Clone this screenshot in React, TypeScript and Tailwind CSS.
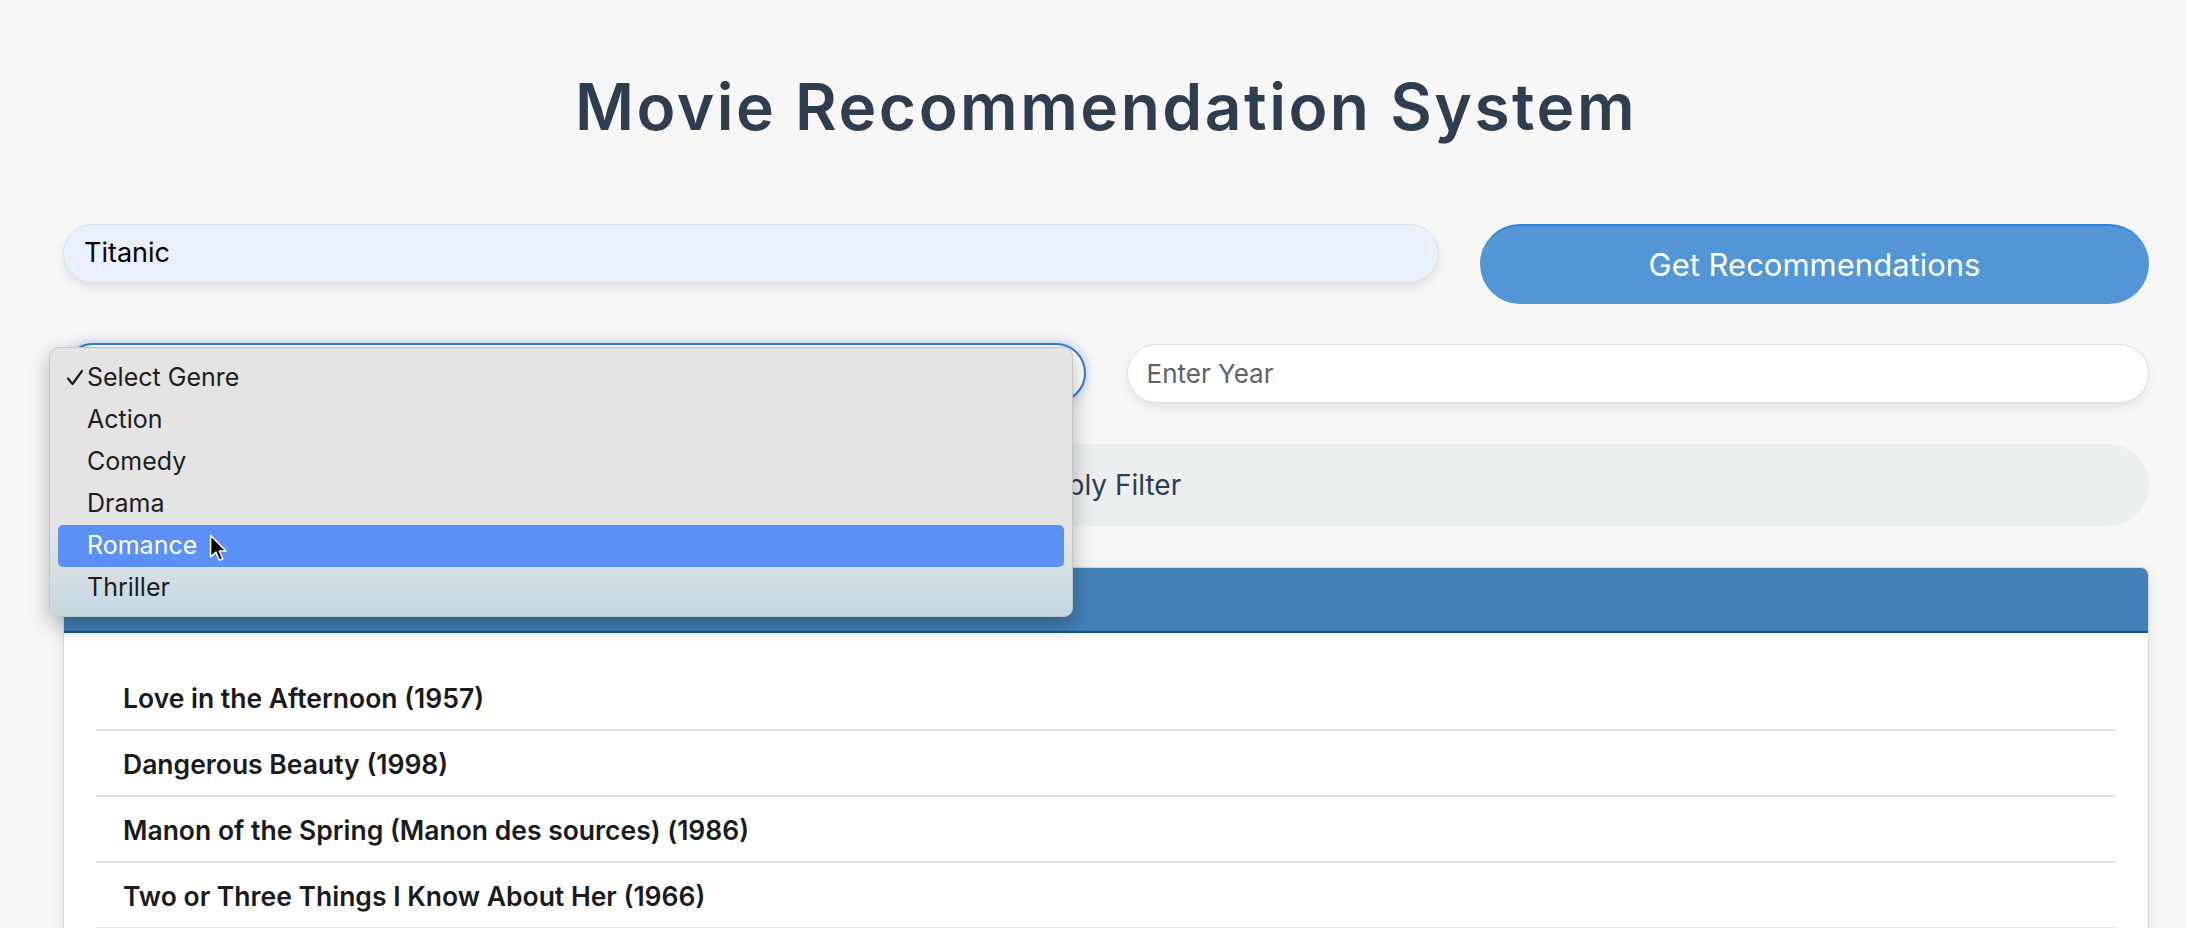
import React from 'react';

const genres = ['Select Genre', 'Action', 'Comedy', 'Drama', 'Romance', 'Thriller'];

const movies = [
  'Love in the Afternoon (1957)',
  'Dangerous Beauty (1998)',
  'Manon of the Spring (Manon des sources) (1986)',
  'Two or Three Things I Know About Her (1966)',
];

function Cursor() {
  return (
    <svg width="18" height="28" viewBox="0 0 12 19" className="absolute left-[151px] top-[9px]">
      <path
        d="M1 1 L1 15.5 L4.6 12.3 L7 17.8 L9.2 16.9 L6.9 11.5 L11.4 11.5 Z"
        fill="#000"
        stroke="#fff"
        strokeWidth="1"
        strokeLinejoin="round"
      />
    </svg>
  );
}

function GenreMenu() {
  return (
    <div className="absolute left-[-14px] top-[4px] z-20 w-[1024px] rounded-[9px] border border-[#c4c6c6] bg-linear-to-b from-[#e3e4e3] from-70% to-[#c3d8e2] px-[8px] pb-[7px] pt-[9px] shadow-[0_8px_22px_rgba(0,0,0,0.28)]">
      {genres.map((g, idx) => (
        <div
          key={g}
          className={
            'relative flex h-[42px] items-center rounded-[5px] pl-[29px] font-["Inter",sans-serif] text-[25px] ' +
            (g === 'Romance' ? 'bg-[#5b91f5] text-white' : 'text-[#1d1d1d]')
          }
        >
          {idx === 0 && (
            <svg width="18" height="18" viewBox="0 0 18 18" className="absolute left-[8px] top-[12px]">
              <path d="M2 9.5 L6.5 15 L16 2" fill="none" stroke="#1d1d1d" strokeWidth="2.2" strokeLinecap="round" strokeLinejoin="round" />
            </svg>
          )}
          {g}
          {g === 'Romance' && <Cursor />}
        </div>
      ))}
    </div>
  );
}

export default function App() {
  return (
    <div className="min-h-screen w-full bg-[#f7f7f7] font-['Inter',sans-serif]">
      <div className="pl-[63px] pr-[37px]">
        <h1 className="pt-[69px] text-center text-[64px] font-semibold leading-[76px] tracking-[2.5px] text-[#2c3e50]">
          Movie Recommendation System
        </h1>

        <div className="mt-[79px] flex items-start gap-[41px]">
          <div className="flex h-[59px] w-[1376px] items-center rounded-full border border-[#dcdfe3] bg-[#e8f0fe] pl-[20px] text-[27px] text-black shadow-[0_5px_10px_rgba(0,0,0,0.09)]">
            Titanic
          </div>
          <button
            type="button"
            className="h-[80px] flex-1 rounded-full border-t-2 border-[#2f86d6] bg-[#5296d5] text-[31px] text-white"
          >
            Get Recommendations
          </button>
        </div>

        <div className="mt-[39px] grid grid-cols-2 gap-[41px]">
          <div className="relative h-[60px]">
            <div className="h-full rounded-full border-2 border-[#2c7fd3] bg-white shadow-[0_0_12px_rgba(60,130,220,0.35)]" />
            <GenreMenu />
          </div>
          <div className="mt-[1px] flex h-[59px] items-center rounded-full border border-[#dcdfe3] bg-white pl-[19px] text-[26px] text-[#5f6368] shadow-[0_5px_10px_rgba(0,0,0,0.08)]">
            Enter Year
          </div>
        </div>

        <button
          type="button"
          className="mt-[41px] flex h-[82px] w-full items-center justify-center rounded-full bg-[#ebeff0] text-[28px] text-[#2c3e50]"
        >
          Apply Filter
        </button>

        <div className="mt-[41px] overflow-hidden rounded-t-[8px] border border-[#d9d9d9] bg-white shadow-[0_4px_14px_rgba(0,0,0,0.1)]">
          <div className="h-[65px] border-b-2 border-[#0d5391] bg-[#4280b6]" />
          <ul className="px-[32px] pt-[32px] pb-[20px]">
            {movies.map((m) => (
              <li
                key={m}
                className="border-b-2 border-[#dee2e6] pb-[10px] pl-[27px] pt-[12px] text-[26.5px] font-semibold leading-[42px] text-[#1b1b1b]"
              >
                {m}
              </li>
            ))}
          </ul>
        </div>
      </div>
    </div>
  );
}
